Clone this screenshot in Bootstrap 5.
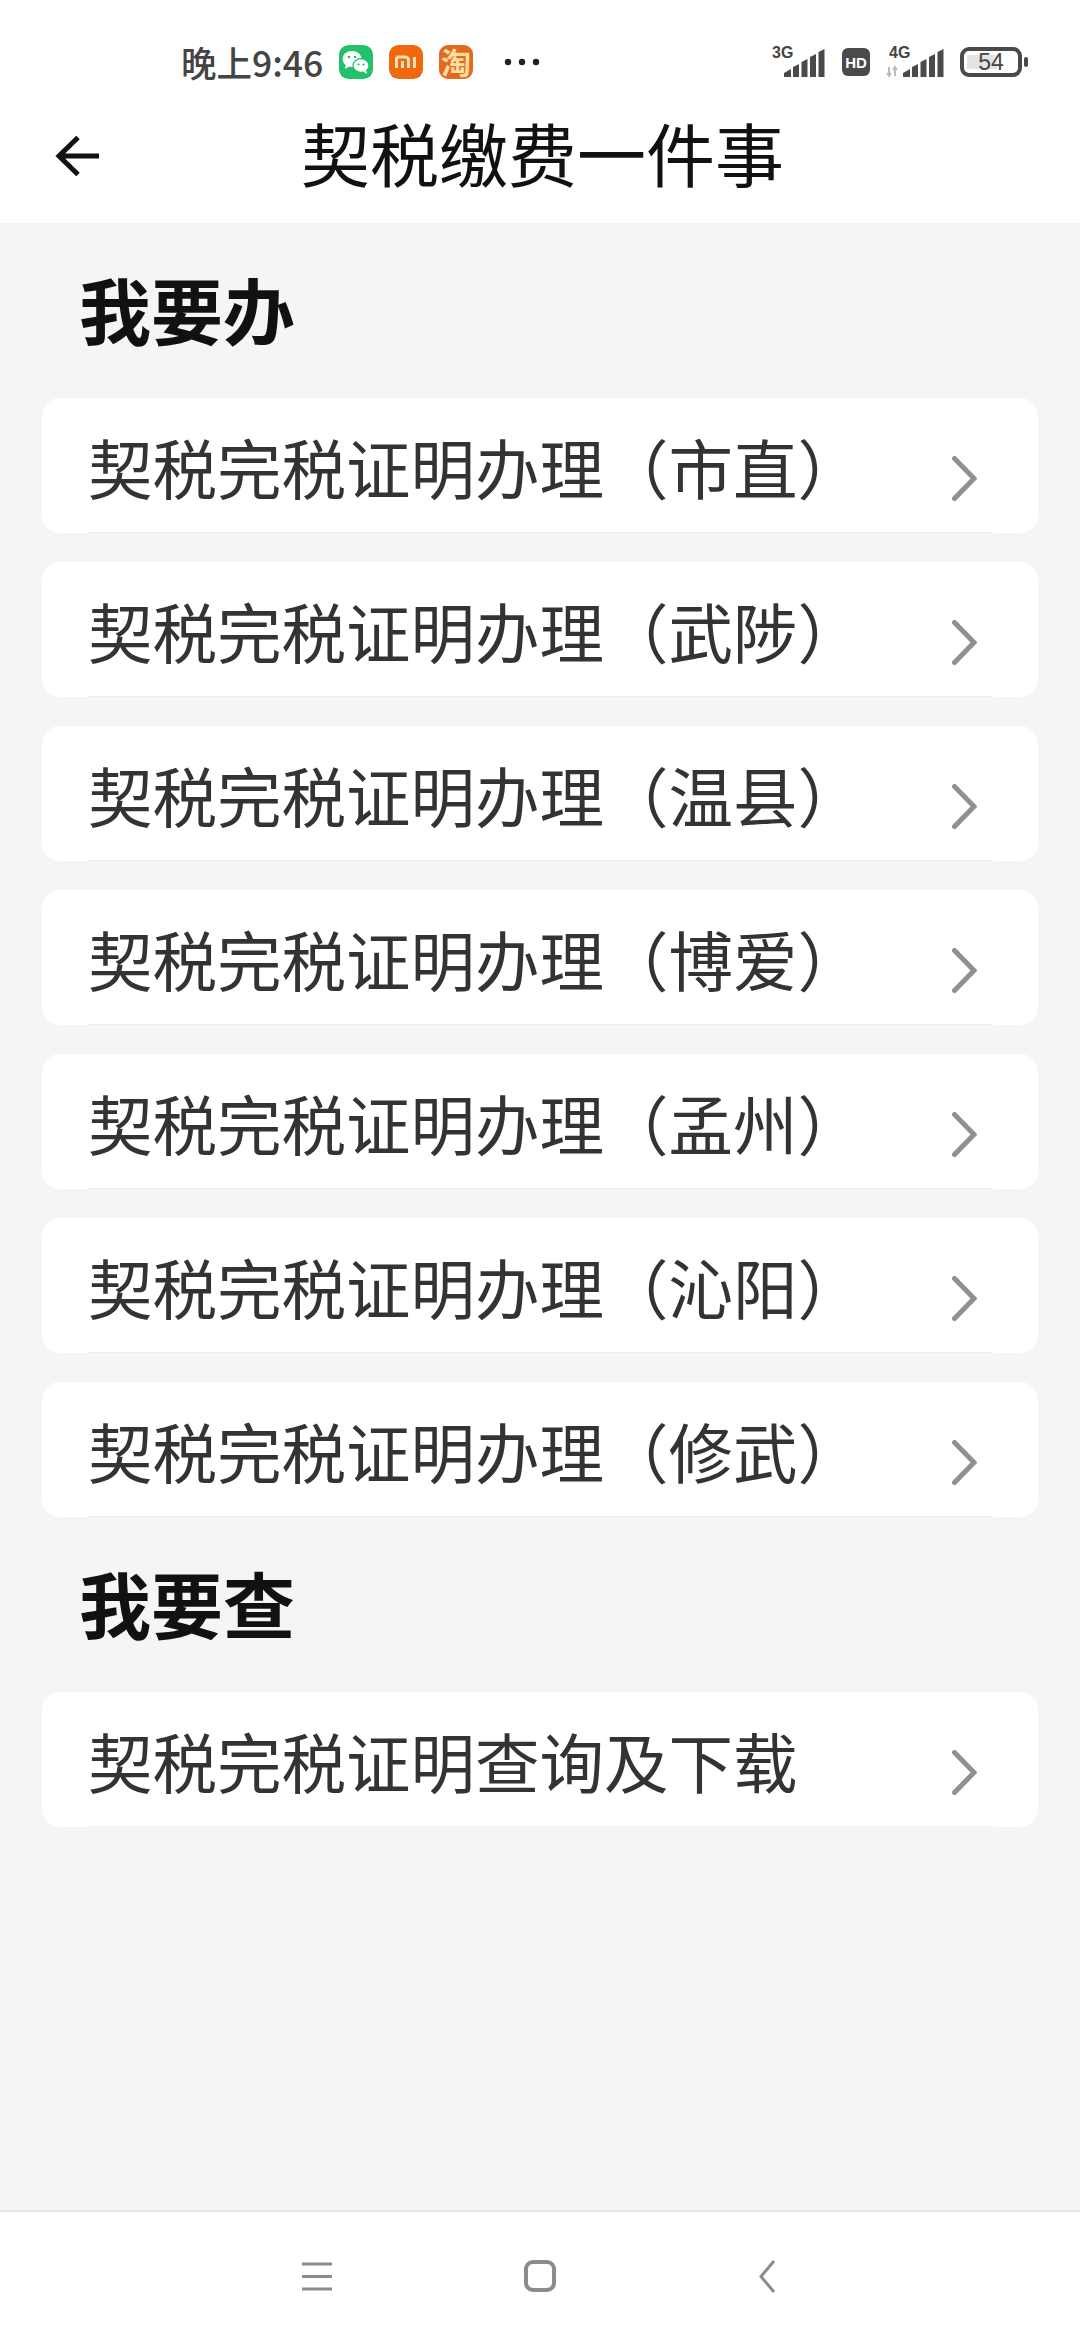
<!DOCTYPE html>
<html lang="zh-CN">

<head>
    <meta charset="UTF-8">
    <meta name="viewport" content="width=device-width, initial-scale=1.0">
    <title>契税缴费一件事</title>
    <link rel="stylesheet" href="https://cdn.jsdelivr.net/npm/bootstrap@5.3.3/dist/css/bootstrap.min.css">
    <script src="https://cdn.jsdelivr.net/npm/bootstrap@5.3.3/dist/js/bootstrap.bundle.min.js"></script>
    <style>
        body {
            font-family: "Noto Sans CJK SC", "Noto Sans", sans-serif;
            background: #f6f5f3;
            min-height: 2340px;
        }

        .status-bar {
            height: 90px;
            padding: 34px 0 0 181px;
            background: #fff;
        }

        .status-time {
            width: 142px;
            margin-right: 16px;
            font-size: 35.5px;
            font-weight: 500;
            line-height: 1;
            white-space: nowrap;
            color: #444;
        }

        .app-icon {
            width: 34px;
            height: 34px;
            margin-right: 16px;
            border-radius: 9px;
        }

        .app-tao {
            background: #e2691f;
            color: #ffdf9e;
            font-size: 30px;
            font-weight: 700;
            line-height: 32px;
            text-align: center;
        }

        .status-dots {
            margin-left: 14px;
        }

        .status-right {
            margin-left: auto;
            padding-right: 52px;
            gap: 16px;
        }

        .title-bar {
            height: 133px;
            padding-left: 55px;
            background: #fff;
        }

        .back-arrow {
            margin-bottom: 2px;
        }

        .title-text {
            margin: 0 0 9px 202px;
            font-size: 69px;
            font-weight: 400;
            line-height: 1;
            color: #111;
        }

        .page-main {
            padding: 0 42px;
        }

        .section-title {
            height: 175px;
            margin: 0;
            padding: 0 0 0 37px;
            font-size: 72px;
            font-weight: 700;
            line-height: 169px;
            color: #111;
        }

        .task-list {
            gap: 29px;
        }

        .task-card {
            height: 135px;
            padding: 0 45px 0 46px;
            border: 0;
            border-radius: 18px;
            background: #fff;
        }

        .task-inner {
            height: 135px;
            border-bottom: 1px solid #eeeeee;
        }

        .task-name {
            font-size: 64.5px;
            line-height: 1;
            margin-top: 2px;
            color: #333;
        }

        .task-arrow {
            margin: 26px 16px 0 0;
        }

        .bottom-bar {
            height: 130px;
            padding: 0 0 0 302px;
            border-top: 2px solid #e6e6e6;
            background: #fff;
        }

        .nav-home {
            margin-left: 192px;
        }

        .nav-back {
            margin-left: 203px;
        }
    </style>
</head>

<body class="d-flex flex-column">
    <div class="status-bar d-flex align-items-center">
        <span class="status-time">晚上9:46</span>
        <svg class="app-icon" viewBox="0 0 34 34">
            <rect width="34" height="34" rx="9" fill="#22c16b" />
            <ellipse cx="13" cy="14" rx="9.5" ry="8" fill="#fff" />
            <path d="M7 19l-1 5 5-3z" fill="#fff" />
            <ellipse cx="22" cy="20.5" rx="8" ry="6.8" fill="#fff" stroke="#22c16b" stroke-width="1.2" />
            <path d="M27 25l1 4-4-2.500z" fill="#fff" />
            <circle cx="10" cy="12" r="1.300" fill="#22c16b" />
            <circle cx="16" cy="12" r="1.300" fill="#22c16b" />
            <circle cx="19.500" cy="19.500" r="1.100" fill="#22c16b" />
            <circle cx="24.500" cy="19.500" r="1.100" fill="#22c16b" />
        </svg>
        <svg class="app-icon" viewBox="0 0 34 34">
            <rect width="34" height="34" rx="9" fill="#f0690f" />
            <path d="M7.500 12h9a3 3 0 0 1 3 3v8M7.500 12v11M13.500 16v7" fill="none" stroke="#f6dfb8" stroke-width="3" />
            <path d="M25.500 12v11" fill="none" stroke="#f6dfb8" stroke-width="3" />
        </svg>
        <span class="app-icon app-tao">淘</span>
        <svg class="status-dots" width="38" height="10" viewBox="0 0 38 10">
            <circle cx="5" cy="5" r="3.200" fill="#222" />
            <circle cx="19" cy="5" r="3.200" fill="#222" />
            <circle cx="33" cy="5" r="3.200" fill="#222" />
        </svg>
        <div class="status-right d-flex align-items-center">
            <svg width="54" height="40" viewBox="0 -4 54 40">
                <text x="0" y="12" font-size="16" font-weight="600" font-family="Liberation Sans" fill="#444">3G</text>
                <path d="M12 31v-4l7-4v8zM21 31v-10l6-3v13zM29.500 31v-15l6-3v18zM38 31v-20l6-3v23zM46.500 31v-25l6-3v28z" fill="#4a4a4a" />
            </svg>
            <svg width="28" height="28" viewBox="0 0 28 28">
                <rect width="28" height="28" rx="6" fill="#4a4a4a" />
                <text x="14" y="20" text-anchor="middle" font-size="15" font-weight="700" font-family="Liberation Sans" fill="#fff">HD</text>
            </svg>
            <svg width="58" height="40" viewBox="0 -4 58 40">
                <text x="3" y="12" font-size="16" font-weight="600" font-family="Liberation Sans" fill="#444">4G</text>
                <path d="M3 21v9M1 27l2 3 2-3M9 30v-9M7 24l2-3 2 3" fill="none" stroke="#bdbdbd" stroke-width="2" />
                <path d="M17 31v-4l7-4v8zM26 31v-10l6-3v13zM34.500 31v-15l6-3v18zM43 31v-20l6-3v23zM51.500 31v-25l6-3v28z" fill="#4a4a4a" />
            </svg>
            <svg width="68" height="30" viewBox="0 0 68 30">
                <rect x="2" y="2" width="58" height="26" rx="7" fill="#fff" stroke="#4a4a4a" stroke-width="4" />
                <rect x="7" y="8" width="30" height="14" fill="#e4e4e4" />
                <text x="31" y="23" text-anchor="middle" font-size="23" font-family="Liberation Sans" fill="#444">54</text>
                <rect x="64" y="10" width="4" height="10" rx="2" fill="#4a4a4a" />
            </svg>
        </div>
    </div>

    <div class="title-bar d-flex align-items-center">
        <svg class="back-arrow" width="44" height="42" viewBox="0 0 44 42">
            <path d="M44 21H4M23 2.500L4 21l19 18.500" fill="none" stroke="#111" stroke-width="5" />
        </svg>
        <h1 class="title-text">契税缴费一件事</h1>
    </div>

    <main class="page-main flex-grow-1">
        <h2 class="section-title">我要办</h2>
        <div class="task-list d-flex flex-column" id="handle-list"></div>
        <h2 class="section-title">我要查</h2>
        <div class="task-list d-flex flex-column" id="query-list"></div>
    </main>

    <div class="bottom-bar d-flex align-items-center">
        <svg width="30" height="29" viewBox="0 0 30 29">
            <path d="M0 2h30M0 14.500h30M0 27h30" fill="none" stroke="#8c8c8c" stroke-width="3" />
        </svg>
        <svg class="nav-home" width="32" height="32" viewBox="0 0 32 32">
            <rect x="2" y="2" width="28" height="28" rx="7" fill="none" stroke="#8c8c8c" stroke-width="4" />
        </svg>
        <svg class="nav-back" width="16" height="33" viewBox="0 0 16 33">
            <path d="M15 1L2 16.500l13 15.500" fill="none" stroke="#8c8c8c" stroke-width="3" />
        </svg>
    </div>

    <script>
        const handleCities = ['市直', '武陟', '温县', '博爱', '孟州', '沁阳', '修武'];

        function taskCard(name) {
            return `
                <a href="#" class="task-card d-block text-decoration-none">
                    <div class="task-inner d-flex align-items-center justify-content-between">
                        <span class="task-name">${name}</span>
                        <svg class="task-arrow" width="25" height="45" viewBox="0 0 25 45">
                            <path d="M2.500 2.500L22 22.500 2.500 42.500" fill="none" stroke="#909090" stroke-width="5" stroke-linecap="round" />
                        </svg>
                    </div>
                </a>`;
        }

        document.getElementById('handle-list').innerHTML = handleCities
            .map(city => taskCard(`契税完税证明办理（${city}）`)).join('');
        document.getElementById('query-list').innerHTML = taskCard('契税完税证明查询及下载');
    </script>
</body>

</html>
